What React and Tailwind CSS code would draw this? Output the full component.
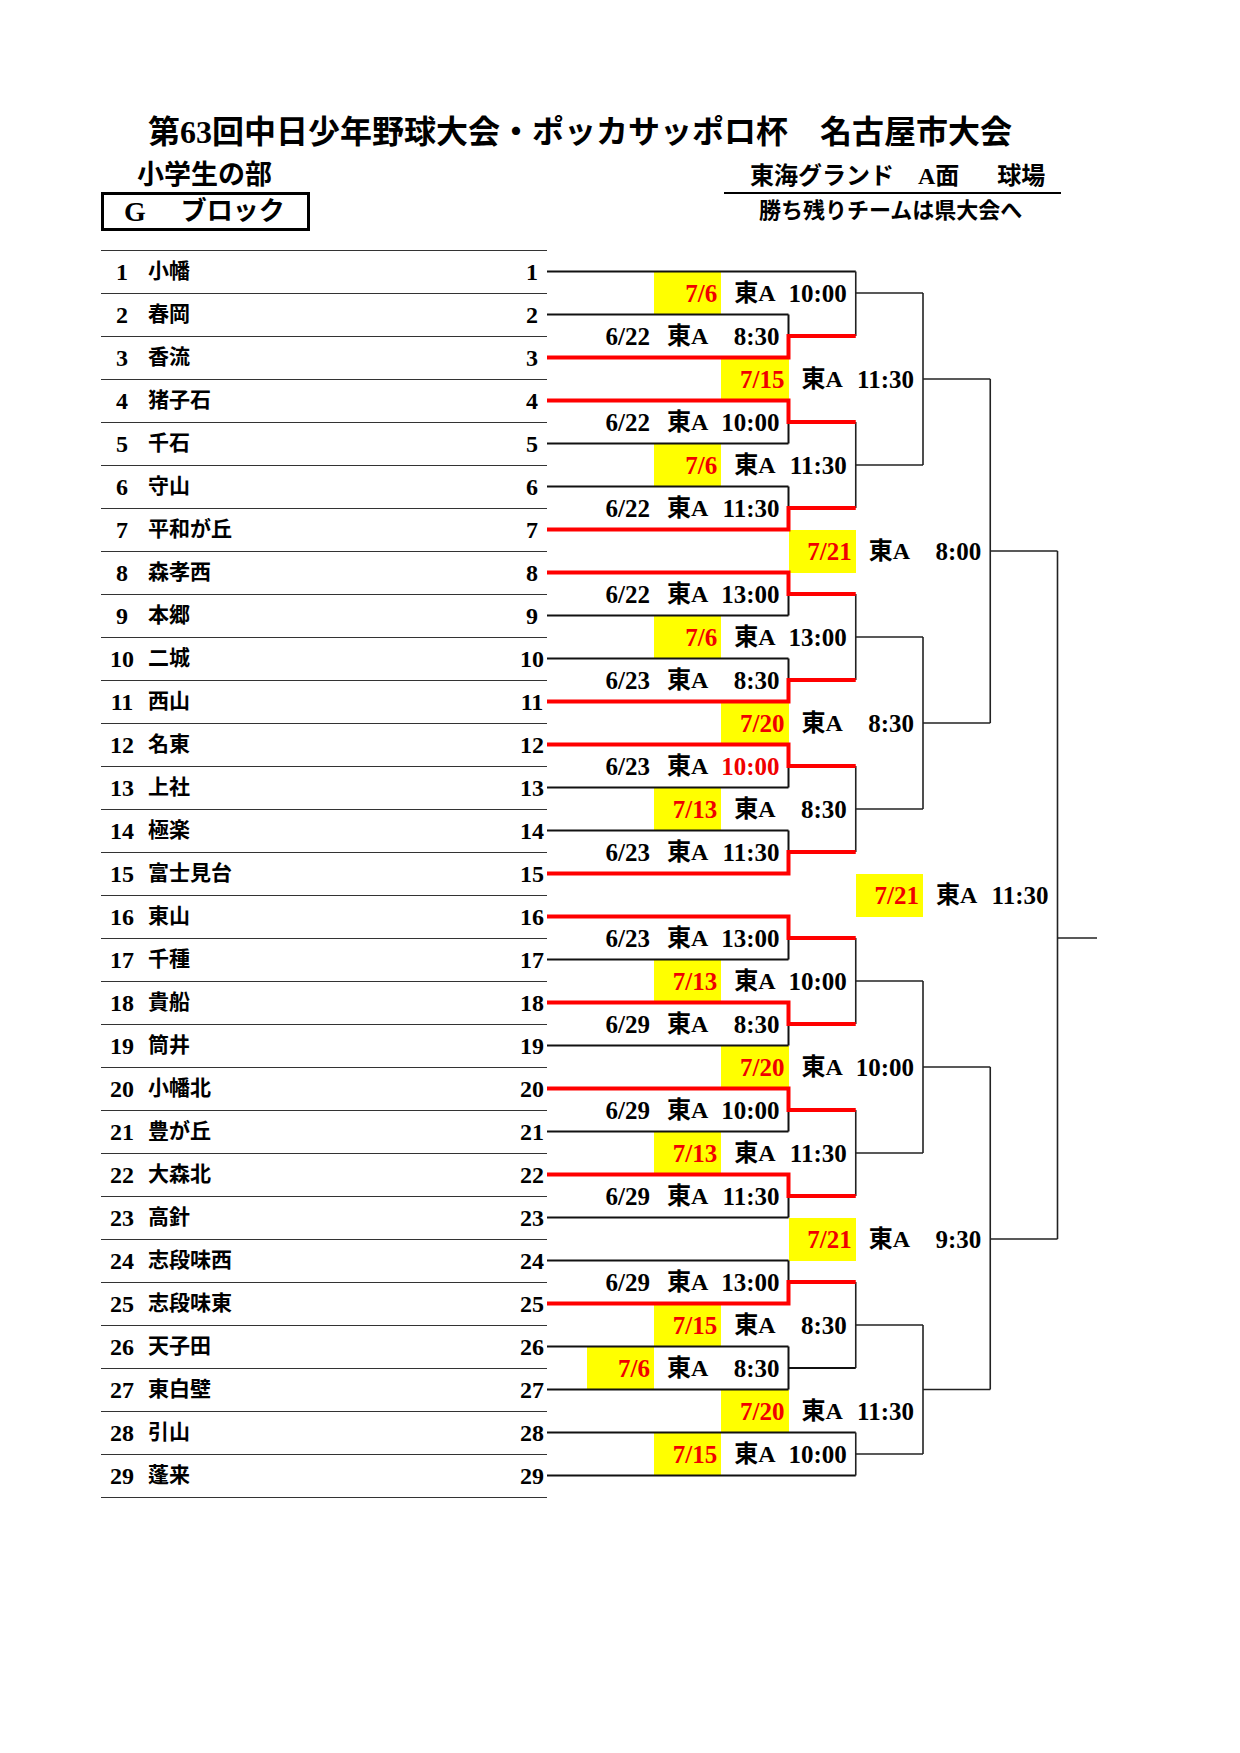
import clsx from 'clsx'

const TEAMS = [
  '小幡', '春岡', '香流', '猪子石', '千石', '守山', '平和が丘', '森孝西', '本郷', '二城',
  '西山', '名東', '上社', '極楽', '富士見台', '東山', '千種', '貴船', '筒井', '小幡北',
  '豊が丘', '大森北', '高針', '志段味西', '志段味東', '天子田', '東白壁', '引山', '蓬来',
]

// p = row position (team n sits at p = n), k = bracket column of the vertical line
const LABELS = [
  { p: 1.5, k: 2, date: '7/6', time: '10:00', hl: true },
  { p: 2.5, k: 1, date: '6/22', time: '8:30' },
  { p: 3.5, k: 3, date: '7/15', time: '11:30', hl: true },
  { p: 4.5, k: 1, date: '6/22', time: '10:00' },
  { p: 5.5, k: 2, date: '7/6', time: '11:30', hl: true },
  { p: 6.5, k: 1, date: '6/22', time: '11:30' },
  { p: 7.5, k: 4, date: '7/21', time: '8:00', hl: true },
  { p: 8.5, k: 1, date: '6/22', time: '13:00' },
  { p: 9.5, k: 2, date: '7/6', time: '13:00', hl: true },
  { p: 10.5, k: 1, date: '6/23', time: '8:30' },
  { p: 11.5, k: 3, date: '7/20', time: '8:30', hl: true },
  { p: 12.5, k: 1, date: '6/23', time: '10:00', red: true },
  { p: 13.5, k: 2, date: '7/13', time: '8:30', hl: true },
  { p: 14.5, k: 1, date: '6/23', time: '11:30' },
  { p: 15.5, k: 5, date: '7/21', time: '11:30', hl: true },
  { p: 16.5, k: 1, date: '6/23', time: '13:00' },
  { p: 17.5, k: 2, date: '7/13', time: '10:00', hl: true },
  { p: 18.5, k: 1, date: '6/29', time: '8:30' },
  { p: 19.5, k: 3, date: '7/20', time: '10:00', hl: true },
  { p: 20.5, k: 1, date: '6/29', time: '10:00' },
  { p: 21.5, k: 2, date: '7/13', time: '11:30', hl: true },
  { p: 22.5, k: 1, date: '6/29', time: '11:30' },
  { p: 23.5, k: 4, date: '7/21', time: '9:30', hl: true },
  { p: 24.5, k: 1, date: '6/29', time: '13:00' },
  { p: 25.5, k: 2, date: '7/15', time: '8:30', hl: true },
  { p: 26.5, k: 1, date: '7/6', time: '8:30', hl: true },
  { p: 27.5, k: 3, date: '7/20', time: '11:30', hl: true },
  { p: 28.5, k: 2, date: '7/15', time: '10:00', hl: true },
]

// first round pairs [top, bottom, winner] (0 = not played yet)
const FIRST_ROUND = [
  [2, 3, 3], [4, 5, 4], [6, 7, 7], [8, 9, 8], [10, 11, 11], [12, 13, 12], [14, 15, 15],
  [16, 17, 16], [18, 19, 18], [20, 21, 20], [22, 23, 22], [24, 25, 25], [26, 27, 0],
]

const X = [0, 241.5, 308.75, 376, 443.25, 510.5]
const END = 550
const Y = (p) => 43 * (p - 0.5)

const buildLines = () => {
  const thick = []
  const thin = []
  const red = []
  const h = (arr, x1, x2, p) => arr.push([x1, Y(p), x2, Y(p)])
  const v = (arr, x, p1, p2) => arr.push([x, Y(p1), x, Y(p2)])

  ;[1, 28, 29].forEach((t) => h(thick, X[0], X[2], t))

  FIRST_ROUND.forEach(([a, b, w]) => {
    const mid = a + 0.5
    if (!w) {
      h(thick, X[0], X[1], a)
      h(thick, X[0], X[1], b)
      v(thick, X[1], a, b)
      h(thick, X[1], X[2], mid)
      return
    }
    const l = w === a ? b : a
    h(thick, X[0], X[1], l)
    v(thick, X[1], l, mid)
    red.push(`M${X[0]} ${Y(w)} H${X[1]} V${Y(mid)} H${X[2]}`)
  })

  const rounds = [
    [2, [[1, 2.5, 1.5], [4.5, 6.5, 5.5], [8.5, 10.5, 9.5], [12.5, 14.5, 13.5], [16.5, 18.5, 17.5], [20.5, 22.5, 21.5], [24.5, 26.5, 25.5], [28, 29, 28.5]]],
    [3, [[1.5, 5.5, 3.5], [9.5, 13.5, 11.5], [17.5, 21.5, 19.5], [25.5, 28.5, 27]]],
    [4, [[3.5, 11.5, 7.5], [19.5, 27, 23.5]]],
    [5, [[7.5, 23.5, 16.5]]],
  ]
  rounds.forEach(([k, list]) => {
    list.forEach(([p1, p2, out]) => {
      v(thin, X[k], p1, p2)
      h(thin, X[k], k === 5 ? END : X[k + 1], out)
    })
  })

  return { thick, thin, red }
}

const LINES = buildLines()

const BracketLines = () => (
  <svg
    className="pointer-events-none absolute inset-0 z-10"
    width="552"
    height="1247"
    viewBox="0 0 552 1247"
  >
    {LINES.thick.map(([x1, y1, x2, y2], i) => (
      <line key={'a' + i} x1={x1} y1={y1} x2={x2} y2={y2} stroke="#111" strokeWidth="2" />
    ))}
    {LINES.thin.map(([x1, y1, x2, y2], i) => (
      <line key={'b' + i} x1={x1} y1={y1} x2={x2} y2={y2} stroke="#222" strokeWidth="1.6" />
    ))}
    {LINES.red.map((d, i) => (
      <path key={'r' + i} d={d} fill="none" stroke="#ff0000" strokeWidth="4" strokeLinejoin="miter" />
    ))}
  </svg>
)

const MatchLabel = ({ label }) => (
  <div
    className="grid grid-cols-3 items-stretch text-[24px] font-bold leading-none"
    style={{
      gridColumn: `${label.k + 1} / span 3`,
      gridRow: `${label.p * 2 - 1} / span 2`,
    }}
  >
    <div
      className={clsx(
        'flex items-center justify-end pr-[4px] text-[25px]',
        label.hl ? 'bg-[#ffff00] text-[#f00000]' : 'text-black'
      )}
    >
      {label.date}
    </div>
    <div className="flex items-center whitespace-nowrap pl-[13px]">東A</div>
    <div
      className={clsx(
        'flex items-center justify-end pr-[9px] text-[25px]',
        label.red ? 'text-[#f00000]' : 'text-black'
      )}
    >
      {label.time}
    </div>
  </div>
)

const TeamTable = () => (
  <div className="ml-[101px] w-[446px] border-b border-[#333]">
    {TEAMS.map((name, i) => (
      <div key={name} className="flex h-[43px] items-center border-t border-[#333] font-bold">
        <div className="w-[42px] text-center text-[24px] leading-none">{i + 1}</div>
        <div className="ml-[5px] flex-1 text-[21px]">{name}</div>
        <div className="w-[30px] text-center text-[24px] leading-none">{i + 1}</div>
      </div>
    ))}
  </div>
)

export default function App() {
  return (
    <div className="h-[1753px] w-[1240px] bg-white font-['Liberation_Serif','Noto_Sans_CJK_JP',serif] text-black">
      <div className="h-[148px] pl-[148px] pt-[116px]">
        <h1 className="whitespace-nowrap text-[32px] font-bold leading-[32px]">
          第63回中日少年野球大会・ポッカサッポロ杯　名古屋市大会
        </h1>
      </div>

      <div className="flex h-[102px]">
        <div className="w-[724px] pl-[101px]">
          <div className="mt-[14px] pl-[36px] text-[27px] font-bold leading-[27px]">
            小学生の部
          </div>
          <div className="mt-[3px] flex h-[39px] w-[209px] items-center border-[3px] border-black font-bold">
            <span className="ml-[20px] text-[28px] leading-none">G</span>
            <span className="ml-[35px] text-[26px] leading-none">ブロック</span>
          </div>
        </div>
        <div className="w-[337px]">
          <div className="mt-[16px] flex whitespace-nowrap pl-[26px] text-[24px] font-bold leading-[24px]">
            <span>東海グランド</span>
            <span className="ml-[24px]">A面</span>
            <span className="ml-[38px]">球場</span>
          </div>
          <div className="mt-[4px] h-[2px] bg-black" />
          <div className="mt-[6px] whitespace-nowrap pl-[35px] text-[22px] font-bold leading-[22px]">
            勝ち残りチームは県大会へ
          </div>
        </div>
      </div>

      <div className="flex">
        <TeamTable />
        <div className="relative grid h-[1247px] w-[552px] grid-cols-[39.75px_repeat(7,67.25px)_1fr] grid-rows-[repeat(58,21.5px)]">
          <BracketLines />
          {LABELS.map((label) => (
            <MatchLabel key={label.p} label={label} />
          ))}
        </div>
      </div>
    </div>
  )
}
